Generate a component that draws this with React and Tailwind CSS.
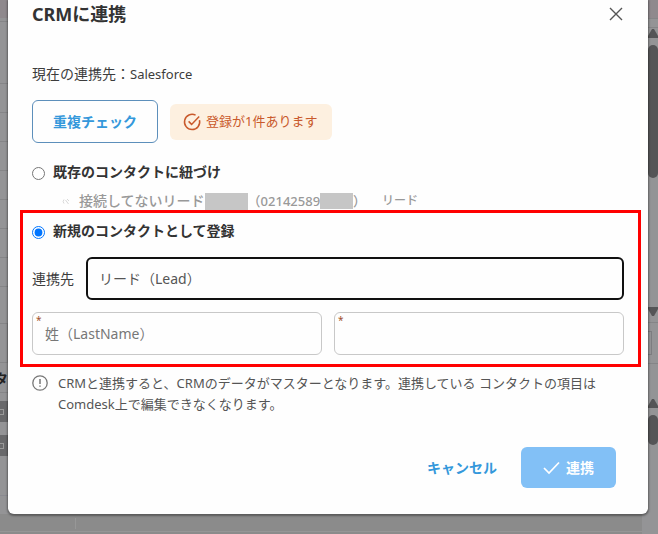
import * as React from "react";

export default function App() {
  return (
    <div
      style={fontStack}
      className="relative min-h-screen overflow-hidden bg-[#949496] text-sm text-[#3c3c3c]"
    >
      <Backdrop />
      <div className="relative ml-2 mr-[10px] rounded-b-md bg-[#fefefe] px-6 pb-[26px] shadow-[0_1px_2px_1px_rgba(0,0,0,0.35)]">
        <header className="flex h-7 items-center justify-between">
          <h1 className="text-lg leading-7 font-bold text-[#333]">
            CRMに連携
          </h1>
          <button aria-label="閉じる" type="button">
            <svg
              className="mr-px h-[14px] w-[14px]"
              viewBox="0 0 14 14"
              fill="none"
              stroke="#555"
              strokeWidth="1.4"
            >
              <path d="M1 1l12 12M13 1L1 13" />
            </svg>
          </button>
        </header>

        <p className="mt-9 leading-5">
          現在の連携先：<span className="text-[13px]">Salesforce</span>
        </p>

        <div className="mt-4 flex items-center gap-3">
          <button
            type="button"
            className="h-[43px] rounded-md border border-[#5d8fbb] px-5 font-bold text-[#3498db]"
          >
            重複チェック
          </button>
          <div className="flex h-9 items-center gap-1 rounded-md bg-[#fdf0e0] pr-[15px] pl-3 text-[13px] text-[#c9592b]">
            <svg
              className="h-5 w-5"
              viewBox="0 0 20 20"
              fill="none"
              stroke="currentColor"
              strokeWidth="1.5"
            >
              <path d="M17.5 8.2A7.6 7.6 0 1 1 13.6 3.2" />
              <path d="M6.6 9.4l3 3L17.2 4.6" />
            </svg>
            登録が1件あります
          </div>
        </div>

        <label className="mt-[19px] flex items-center gap-2 leading-5 font-bold text-[#333]">
          <input type="radio" name="mode" className="mt-0.5 h-[13px] w-[13px]" />
          既存のコンタクトに紐づけ
        </label>

        <div className="mt-[10px] flex h-[18px] items-center pl-[30px] font-medium text-[#999]">
          <label className="flex items-center leading-[18px]">
            <svg className="mr-2 h-[9px] w-[9px]" viewBox="0 0 9 9">
              <path
                d="M2 2.5a3 3 0 0 0 0 4M3.5 3l3 4M5 2l2 2"
                fill="none"
                stroke="#d8d8d8"
              />
            </svg>
            接続してないリード
          </label>
          <span className="h-[17px] w-[43px] bg-[#c6c6c6]" />
          <span className="text-[13px]">（02142589</span>
          <span className="h-4 w-[33px] bg-[#c6c6c6]" />
          <span className="text-[13px]">）</span>
          <span className="ml-4 text-xs">リード</span>
        </div>

        <section className="relative -mr-[17px] -ml-3 border-[3px] border-[#ff0000] pt-2 pr-[14px] pb-[9px] pl-[9px]">
          <label className="flex items-center gap-2 leading-5 font-bold text-[#333]">
            <input
              type="radio"
              name="mode"
              defaultChecked
              className="mt-0.5 h-[13px] w-[13px]"
            />
            新規のコンタクトとして登録
          </label>

          <div className="mt-4 flex items-center gap-3">
            <label htmlFor="target">連携先</label>
            <select
              id="target"
              className="h-[43px] min-w-0 flex-1 appearance-none rounded-md border-2 border-[#111] bg-[#fefefe] px-[11px] text-[#555]"
            >
              <option>リード（Lead）</option>
            </select>
          </div>

          <div className="mt-3 grid grid-cols-2 gap-3">
            <Field placeholder="姓（LastName）" label="姓" />
            <Field placeholder="" label="会社名" />
          </div>
        </section>

        <div className="mt-1.5 flex gap-[10px] text-[13px] leading-[21px] text-[#555]">
          <svg
            className="mt-0.5 h-4 w-4 shrink-0"
            viewBox="0 0 16 16"
            fill="none"
            stroke="#777"
            strokeWidth="1.3"
          >
            <circle cx="8" cy="8" r="7.2" />
            <path d="M8 4v5M8 10.4v1.4" strokeWidth="1.5" />
          </svg>
          <p>
            CRMと連携すると、CRMのデータがマスターとなります。連携している
            コンタクトの項目はComdesk上で編集できなくなります。
          </p>
        </div>

        <footer className="mt-8 flex items-center justify-end gap-6 pr-2 font-bold">
          <button type="button" className="text-[#3498db]">
            キャンセル
          </button>
          <button
            type="button"
            className="flex h-[41px] items-center gap-1.5 rounded-md bg-[#82c0f6] px-[22px] text-white"
          >
            <svg
              className="h-[17px] w-[17px]"
              viewBox="0 0 17 17"
              fill="none"
              stroke="currentColor"
              strokeWidth="1.7"
            >
              <path d="M1 9l5 5L16 3.5" />
            </svg>
            連携
          </button>
        </footer>
      </div>
    </div>
  );
}

function Field({ placeholder, label }) {
  return (
    <div className="relative">
      <input
        type="text"
        aria-label={label}
        placeholder={placeholder}
        className="block h-[43px] w-full rounded-md border border-[#c8c8c8] bg-[#fefefe] px-3 placeholder:text-[#777]"
      />
      <span className="absolute top-0.5 left-1 text-[10px] leading-3 text-[#a0522d]">
        *
      </span>
    </div>
  );
}

// dimmed page behind the dialog
function Backdrop() {
  return (
    <div className="absolute inset-0 flex flex-col" aria-hidden="true">
      <div className="flex flex-1 justify-between">
        <div className="w-2">
          <div className="h-[18px] bg-[#8f898d]" />
          <div className="h-1 border-b border-[#858587]" />
          <div className="h-[62px] border-b border-[#858587]" />
          {rows.map((row) => (
            <div key={row} className="h-[29px] border-b border-[#858587]" />
          ))}
          <div className="mt-9 h-10 border-y border-r border-[#858587]" />
          <div className="mt-1.5 flex h-6 justify-end overflow-hidden border-b border-[#858587] leading-5 font-bold text-[#222]">
            タ
          </div>
          <div className="mt-2 flex h-[21px] items-center bg-[#69696b]">
            <span className="h-1.5 w-1 border border-l-0 border-[#999]" />
          </div>
          <div className="mt-[13px] flex h-[21px] items-center bg-[#69696b]">
            <span className="h-1.5 w-1 border border-l-0 border-[#999]" />
          </div>
          <div className="h-10 border-b border-[#8a8a90]" />
        </div>

        <div className="flex w-[10px] flex-col items-center">
          <div className="h-[18px] w-full bg-[#8f898d]" />
          <div className="h-[10px] w-full border-y border-[#858587]" />
          <Arrow up />
          <div className="mt-[7px] h-[133px] w-[10px] rounded-full bg-[#555557]" />
          <div className="mt-[129px]">
            <Arrow />
          </div>
          <div className="mt-[5px] h-[42px] w-full border-y border-[#858587] pt-2">
            <div className="h-6 w-1 border border-l-0 border-[#7d7d80]" />
          </div>
          <div className="mt-[34px]">
            <Arrow up />
          </div>
          <div className="mt-[7px] h-[30px] w-[10px] rounded-full bg-[#555557]" />
        </div>
      </div>
      <div className="mr-4 h-5 bg-[#8b8b8b] pt-1">
        <div className="ml-[75px] h-[11px] w-px bg-[#979797]" />
        <div className="mt-0.5 h-px bg-[#969696]" />
      </div>
    </div>
  );
}

function Arrow({ up }) {
  return (
    <svg className="block h-[10px] w-[10px]" viewBox="0 0 10 10">
      <path d={up ? "M0 10V8l4-7h2l4 7v2z" : "M0 0v2l4 7h2l4-7V0z"} fill="#555557" />
    </svg>
  );
}

const rows = [1, 2, 3, 4, 5, 6, 7];

const fontStack = {
  fontFamily: '"Noto Sans", "Noto Sans CJK JP", sans-serif',
};
